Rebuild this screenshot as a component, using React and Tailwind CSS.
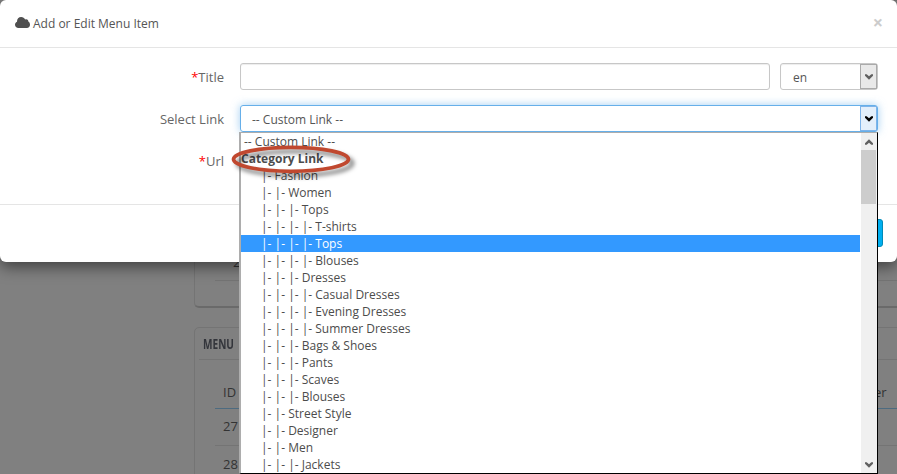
const options = [
  [1, 'Fashion'],
  [2, 'Women'],
  [3, 'Tops'],
  [4, 'T-shirts'],
  [4, 'Tops', true],
  [4, 'Blouses'],
  [3, 'Dresses'],
  [4, 'Casual Dresses'],
  [4, 'Evening Dresses'],
  [4, 'Summer Dresses'],
  [3, 'Bags & Shoes'],
  [3, 'Pants'],
  [3, 'Scaves'],
  [3, 'Blouses'],
  [2, 'Street Style'],
  [2, 'Designer'],
  [2, 'Men'],
  [3, 'Jackets'],
];

function Chevron({ up, className = '' }) {
  return (
    <svg viewBox="0 0 8 6" className={`h-[6px] w-[8px] ${className}`}>
      <path
        d={up ? 'M0 4.2 4 0.2 8 4.2V5.8H6.3L4 3.7 1.7 5.8H0Z' : 'M0 1.8 4 5.8 8 1.8V0.2H6.3L4 2.3 1.7 0.2H0Z'}
        fill="currentColor"
      />
    </svg>
  );
}

function Cloud() {
  return (
    <svg viewBox="0 0 15 11" className="mr-[3px] h-[11px] w-[15px] -translate-y-px">
      <path
        d="M3.400 11C1.500 11 0 9.600 0 7.700 0 6.300.8 5.200 2 4.700 1.900 2 3.700 0 6.200 0c1.800 0 3.300 1 3.900 2.600.3-.3.800-.4 1.200-.4 1.300 0 2.200 1.100 2 2.400C14.400 5.100 15 6.400 15 7.700 15 9.600 13.700 11 11.800 11Z"
        fill="#4f4f4f"
      />
    </svg>
  );
}

function Backdrop() {
  return (
    <div className="flex h-[474px] flex-col pl-[194px]">
      <div className="flex h-[308px] w-[760px] shrink-0 flex-col justify-end rounded-[5px] border border-b-2 border-[#747474] border-b-[#6a6a6a] pl-[20px]">
        <div className="flex h-[30px] items-center border-b border-[#747474] pb-[6px] pl-[18px] text-[13px] text-[#333]">
          26
        </div>
        <div className="h-[25px]" />
      </div>
      <div className="mt-[19px] h-[170px] w-[760px] shrink-0 rounded-t-[5px] border border-[#747474] px-[4px]">
        <div className="flex h-[32px] items-center border-b border-[#747474] pl-[4px]">
          <span className="w-[33px] origin-left scale-x-[0.72] whitespace-nowrap text-[14px] font-bold text-[#33353b]">MENU</span>
        </div>
        <div className="ml-[16px] text-[13px] text-[#333]">
          <div className="flex h-[49px] items-end border-b border-[#4d6b80] pb-[6px] pl-[8px]">
            <span className="w-[651px] shrink-0">ID</span>
            <span>er</span>
          </div>
          <div className="flex h-[37px] items-center border-b border-[#747474] pl-[8px]">27</div>
          <div className="flex h-[37px] items-center pl-[8px]">28</div>
        </div>
      </div>
    </div>
  );
}

function Label({ required, children }) {
  return (
    <label className="w-[224px] shrink-0 text-right text-[13px] leading-[18px] text-[#666]">
      {required && <span className="text-[#f00]">*</span>}
      {children}
    </label>
  );
}

function Modal() {
  return (
    <div className="absolute left-0 top-0 h-[262px] w-[897px] rounded-[6px] bg-white shadow-[0_5px_15px_rgba(0,0,0,0.5)]">
      <div className="flex h-[48px] items-center border-b border-[#e5e5e5] pl-[15px] pr-[14px]">
        <Cloud />
        <h4 className="text-[12px] leading-[18px] text-[#555]">Add or Edit Menu Item</h4>
        <span className="ml-auto pb-[3px] text-[18px] font-bold leading-[18px] text-[#ccc]">×</span>
      </div>
      <div className="h-[157px] border-b border-[#e5e5e5] pt-[15px]">
        <div className="flex h-[27px] items-center">
          <Label required>Title</Label>
          <div className="ml-[16px] h-[27px] w-[530px] rounded-[3px] border border-[#c7c7c7] shadow-[inset_0_1px_1px_rgba(0,0,0,0.075)]" />
          <div className="ml-[10px] flex h-[27px] w-[98px] rounded-[3px] border border-[#c7c7c7] shadow-[inset_0_1px_1px_rgba(0,0,0,0.075)]">
            <span className="flex-1 pl-[12px] pt-[5px] text-[12px] leading-[17px] text-[#555]">en</span>
            <span className="flex w-[17px] items-center justify-center border border-[#aaa] bg-[#e9e9e9] text-[#606060]">
              <Chevron />
            </span>
          </div>
        </div>
        <div className="mt-[15px] flex h-[27px] items-center">
          <Label>Select Link</Label>
          <div className="ml-[16px] flex h-[27px] w-[638px] rounded-[3px] border border-[#66afe9] shadow-[0_0_8px_rgba(102,175,233,0.6)]">
            <span className="flex-1 pl-[11px] pt-[5px] text-[12px] leading-[17px] text-[#555]">-- Custom Link --</span>
            <span className="flex w-[17px] items-center justify-center border border-[#7eb4ea] bg-[#e3effb] text-black">
              <Chevron />
            </span>
          </div>
        </div>
        <div className="mt-[15px] flex h-[27px] items-center">
          <Label required>Url</Label>
        </div>
      </div>
      <div className="flex justify-end pr-[14px] pt-[14px]">
        <div className="h-[28px] w-[60px] rounded-[3px] border border-[#008ab8] bg-[#00aff0]" />
      </div>
    </div>
  );
}

function OptionList() {
  return (
    <div className="absolute left-[239px] top-[132px] flex h-[342px] w-[639px] border-b border-l-2 border-r border-t border-b-black border-l-[#adadad] border-r-black border-t-[#adadad] bg-white">
      <div className="min-w-0 flex-1 text-[12px] leading-[17px] text-[#4c4c4c]">
        <div className="h-[17px] pl-[3px]">-- Custom Link --</div>
        <div className="h-[17px] font-bold">Category Link</div>
        {options.map(([depth, name, active], i) => (
          <div
            key={i}
            className={`mr-px flex h-[17px] whitespace-pre pl-[20px] ${active ? 'bg-[#3399ff] text-white' : ''}`}
          >
            {'|- '.repeat(depth) + name}
          </div>
        ))}
      </div>
      <div className="flex w-[16px] flex-col items-center bg-[#f0f0f0]">
        <div className="flex h-[17px] items-center text-[#606060]">
          <Chevron up />
        </div>
        <div className="mr-px h-[54px] w-[15px] bg-[#cdcdcd]" />
        <div className="mt-auto flex h-[17px] items-center text-[#606060]">
          <Chevron />
        </div>
      </div>
    </div>
  );
}

export default function App() {
  return (
    <div className="relative h-[474px] w-[897px] overflow-hidden bg-[#808080] font-['Open_Sans',sans-serif]">
      <Backdrop />
      <Modal />
      <OptionList />
      <svg
        viewBox="0 0 130 40"
        className="absolute left-[228px] top-[140px] h-[40px] w-[130px] drop-shadow-[4px_4px_2px_rgba(0,0,0,0.5)]"
      >
        <ellipse cx="63" cy="19.300" rx="57.500" ry="12" fill="none" stroke="#c0482f" strokeWidth="3.700" />
      </svg>
    </div>
  );
}
